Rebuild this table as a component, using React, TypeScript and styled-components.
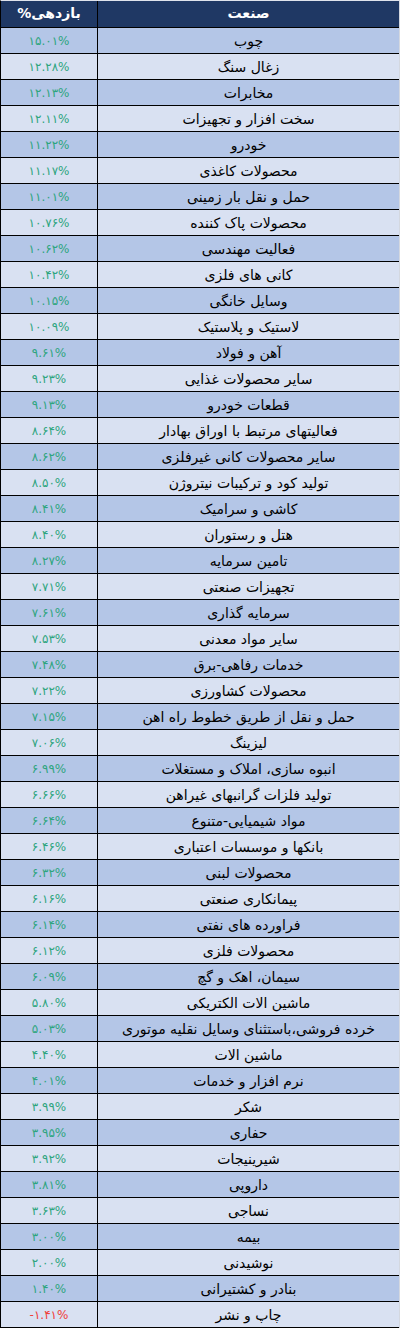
import React from "react";
import styled, { createGlobalStyle } from "styled-components";

const GlobalStyle = createGlobalStyle`
  html, body { margin: 0; padding: 0; background: #ffffff; }
  body { font-family: "DejaVu Sans", "Noto Sans", sans-serif; }
`;

type Item = { name: string; value: string };

const data: Item[] = [
  { name: "چوب", value: "۱۵.۰۱%" },
  { name: "زغال سنگ", value: "۱۲.۲۸%" },
  { name: "مخابرات", value: "۱۲.۱۳%" },
  { name: "سخت افزار و تجهیزات", value: "۱۲.۱۱%" },
  { name: "خودرو", value: "۱۱.۲۲%" },
  { name: "محصولات کاغذی", value: "۱۱.۱۷%" },
  { name: "حمل و نقل بار زمینی", value: "۱۱.۰۱%" },
  { name: "محصولات پاک کننده", value: "۱۰.۷۶%" },
  { name: "فعالیت مهندسی", value: "۱۰.۶۲%" },
  { name: "کانی های فلزی", value: "۱۰.۴۲%" },
  { name: "وسایل خانگی", value: "۱۰.۱۵%" },
  { name: "لاستیک و پلاستیک", value: "۱۰.۰۹%" },
  { name: "آهن و فولاد", value: "۹.۶۱%" },
  { name: "سایر محصولات غذایی", value: "۹.۲۳%" },
  { name: "قطعات خودرو", value: "۹.۱۳%" },
  { name: "فعالیتهای مرتبط با اوراق بهادار", value: "۸.۶۴%" },
  { name: "سایر محصولات کانی غیرفلزی", value: "۸.۶۲%" },
  { name: "تولید کود و ترکیبات نیتروژن", value: "۸.۵۰%" },
  { name: "کاشی و سرامیک", value: "۸.۴۱%" },
  { name: "هتل و رستوران", value: "۸.۴۰%" },
  { name: "تامین سرمایه", value: "۸.۲۷%" },
  { name: "تجهیزات صنعتی", value: "۷.۷۱%" },
  { name: "سرمایه گذاری", value: "۷.۶۱%" },
  { name: "سایر مواد معدنی", value: "۷.۵۳%" },
  { name: "خدمات رفاهی-برق", value: "۷.۴۸%" },
  { name: "محصولات کشاورزی", value: "۷.۲۲%" },
  { name: "حمل و نقل از طریق خطوط راه اهن", value: "۷.۱۵%" },
  { name: "لیزینگ", value: "۷.۰۶%" },
  { name: "انبوه سازی، املاک و مستغلات", value: "۶.۹۹%" },
  { name: "تولید فلزات گرانبهای غیراهن", value: "۶.۶۶%" },
  { name: "مواد شیمیایی-متنوع", value: "۶.۶۴%" },
  { name: "بانکها و موسسات اعتباری", value: "۶.۴۶%" },
  { name: "محصولات لبنی", value: "۶.۳۲%" },
  { name: "پیمانکاری صنعتی", value: "۶.۱۶%" },
  { name: "فراورده های نفتی", value: "۶.۱۴%" },
  { name: "محصولات فلزی", value: "۶.۱۲%" },
  { name: "سیمان، اهک و گچ", value: "۶.۰۹%" },
  { name: "ماشین الات الکتریکی", value: "۵.۸۰%" },
  { name: "خرده فروشی،باستثنای وسایل نقلیه موتوری", value: "۵.۰۳%" },
  { name: "ماشین الات", value: "۴.۴۰%" },
  { name: "نرم افزار و خدمات", value: "۴.۰۱%" },
  { name: "شکر", value: "۳.۹۹%" },
  { name: "حفاری", value: "۳.۹۵%" },
  { name: "شیرینیجات", value: "۳.۹۲%" },
  { name: "داروپی", value: "۳.۸۱%" },
  { name: "نساجی", value: "۳.۶۳%" },
  { name: "بیمه", value: "۳.۰۰%" },
  { name: "نوشیدنی", value: "۲.۰۰%" },
  { name: "بنادر و کشتیرانی", value: "۱.۴۰%" },
  { name: "چاپ و نشر", value: "-۱.۴۱%" },
];

const Table = styled.div`
  width: 400px;
  box-sizing: border-box;
  border-top: 1px solid #dfe3ec;
  border-left: 1px solid #000000;
  border-right: 1px solid #d4d8e0;
  display: flex;
  flex-direction: column;
`;

const HeaderRow = styled.div`
  display: grid;
  grid-template-columns: 97px 1fr;
  height: 27px;
  box-sizing: border-box;
  background: #1f3864;
  border-bottom: 1px solid #000000;
`;

const Row = styled.div<{ $shade: boolean }>`
  display: grid;
  grid-template-columns: 97px 1fr;
  height: 26px;
  box-sizing: border-box;
  background: ${(p) => (p.$shade ? "#b4c6e7" : "#d9e1f2")};
  border-bottom: 1px solid #000000;
`;

const HeadCell = styled.div<{ $first?: boolean }>`
  display: flex;
  align-items: center;
  justify-content: center;
  color: #ffffff;
  font-weight: bold;
  font-size: 14px;
  direction: rtl;
  border-right: ${(p) => (p.$first ? "1px solid #000000" : "none")};
  padding-bottom: 2px;
`;

const ValueCell = styled.div<{ $negative: boolean }>`
  display: flex;
  align-items: center;
  justify-content: center;
  direction: ltr;
  border-right: 1px solid #000000;
  color: ${(p) => (p.$negative ? "#f0403a" : "#2ea57e")};
  font-size: 12px;
`;

const NameCell = styled.div`
  display: flex;
  align-items: center;
  justify-content: center;
  direction: rtl;
  color: #000000;
  font-size: 14px;
  white-space: nowrap;
`;

export default function App() {
  return (
    <>
      <GlobalStyle />
      <Table>
        <HeaderRow>
          <HeadCell $first>بازدهی%</HeadCell>
          <HeadCell>صنعت</HeadCell>
        </HeaderRow>
        {data.map((d, i) => (
          <Row key={i} $shade={i % 2 === 0}>
            <ValueCell $negative={d.value.startsWith("-")}>{d.value}</ValueCell>
            <NameCell>{d.name}</NameCell>
          </Row>
        ))}
      </Table>
    </>
  );
}
